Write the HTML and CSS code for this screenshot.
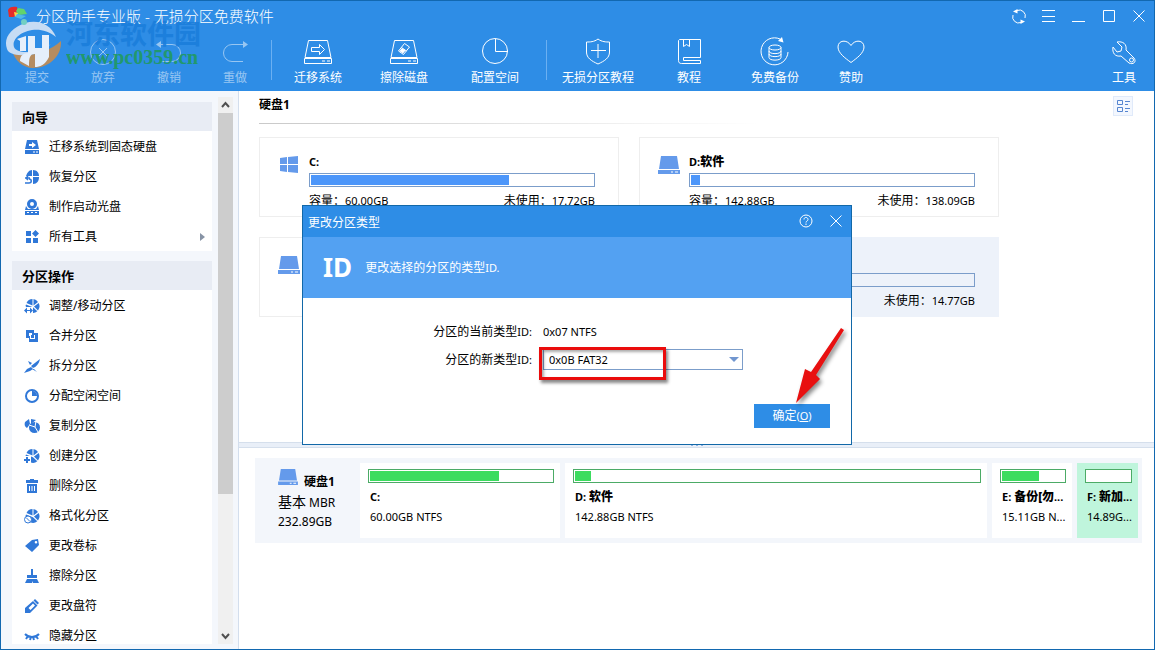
FILE: index.html
```html
<!DOCTYPE html>
<html lang="zh-CN">
<head>
<meta charset="utf-8">
<title>分区助手专业版 - 无损分区免费软件</title>
<meta name="viewport" content="width=device-width, initial-scale=1">
<link rel="stylesheet" href="styles.css">
</head>
<body>
<svg class="defs" aria-hidden="true">
  <symbol id="drive" viewBox="0 0 22 20">
    <path fill="currentColor" d="M3 1h16l2 13H1zM0 15h22v4H0z"/>
    <path fill="#fff" d="M13 16.500h2v1h-2zM17 16.500h3v1h-3z"/>
  </symbol>
  <symbol id="pie" viewBox="0 0 16 16">
    <path fill="currentColor" d="M2.500 5A6.800 6.800 0 0 1 8.500 1v6.500zM9.500 1A6.800 6.800 0 0 1 14 4l-4.500 3.500zM14.700 5a7 7 0 0 1-.7 7.500L10 8.500zM2 6.500l7 2.700 4.300 4.100a6.800 6.800 0 0 1-7 1L1.500 8z"/>
  </symbol>
</svg>
<div class="window">
  <header class="header">
    <div class="titlebar">
      <svg class="app-logo" viewBox="0 0 20 20"><path fill="#e42b2b" d="M0 4C1 1 5 0 9 1l1 5-4 5H1z"/><path fill="#f6d74b" d="m6 6 5 1-4 4z"/><path fill="#63d36d" d="m10 2 6 1 3 5-8 1-3-4z"/><path fill="#4fb9e8" d="m9 8 9 2-5 3-6-2z"/></svg>
      <h1 class="title">分区助手专业版 - 无损分区免费软件</h1>
      <div class="window-buttons">
        <button aria-label="刷新"><svg viewBox="0 0 16 16"><path d="M6 2.500A6 6 0 0 1 14 10M10 14.500A6 6 0 0 1 2 7"/><path class="solid" d="m2 3.500 4.500-2.500v4.500zM14 13.500 9.500 16v-4.500z"/></svg></button>
        <button aria-label="菜单"><svg viewBox="0 0 16 16"><path d="M1 2.500h13M1 8.500h13M1 13.500h13"/></svg></button>
        <button aria-label="最小化"><svg viewBox="0 0 16 16"><path d="M1 13.500h13"/></svg></button>
        <button aria-label="最大化"><svg viewBox="0 0 16 16"><path d="M2.500 2.500h11v11h-11z"/></svg></button>
        <button aria-label="关闭"><svg viewBox="0 0 16 16"><path d="m2.500 2.500 11 11m0-11-11 11"/></svg></button>
      </div>
    </div>
    <nav class="toolbar">
      <button class="tool tool-s" disabled><svg viewBox="0 0 30 30"></svg>提交</button>
      <button class="tool tool-s" disabled><svg viewBox="0 0 30 30"><circle cx="15" cy="15" r="12.500"/><path d="m11 11 8 8m0-8-8 8"/></svg>放弃</button>
      <button class="tool tool-s" disabled><svg viewBox="0 0 30 30"><path d="M5 7.500h13a8.500 8.500 0 0 1 0 17H7"/><path class="solid" d="M2 7.500 7 4v7z"/></svg>撤销</button>
      <button class="tool tool-s" disabled><svg viewBox="0 0 30 30"><path d="M25 7.500H12a8.500 8.500 0 0 0 0 17h11"/><path class="solid" d="m28 7.500-5-3.500v7z"/></svg>重做</button>
      <span class="divider"></span>
      <button class="tool tool-m"><svg viewBox="0 0 30 30"><path d="M5.500 3.500h19l3.500 17H2zM1.500 21.500h27v5h-27zM19 24h3m2 0h3"/><path d="M8.500 10.500h8v-3l5 5-5 5v-3h-8z"/></svg>迁移系统</button>
      <button class="tool tool-m"><svg viewBox="0 0 30 30"><path d="M5.500 3.500h19l3.500 17H2zM1.500 21.500h27v5h-27zM19 24h3m2 0h3"/><path d="m9.500 14 6-7.500 5 3.500-6 7.500zm3-3.500 5 3.500"/><path class="solid" d="m10.500 14 2.500-3 3.500 2.500-2.500 3z"/></svg>擦除磁盘</button>
      <button class="tool tool-l"><svg viewBox="0 0 30 30"><circle cx="15" cy="14" r="12.500"/><path d="M15.500 2v12.500H28"/></svg>配置空间</button>
      <span class="divider"></span>
      <button class="tool tool-l"><svg viewBox="0 0 30 30"><path d="M15 2c4 3 8 3 11.500 3v10c0 6-5 9-11.500 12C8.500 24 3.500 21 3.500 15V5C7 5 11 5 15 2zM15 7v14M8 13.500h15"/></svg>无损分区教程</button>
      <button class="tool tool-m"><svg viewBox="0 0 30 30"><path d="M5.500 2.500h21v18h-17v3h17v3h-19c-2 0-3-1-3-3v-20zM9.500 3v6.500l3-2 3 2V3"/></svg>教程</button>
      <button class="tool tool-m"><svg viewBox="0 0 30 30"><path d="M20 2A13.500 13.500 0 1 0 28 15"/><path class="solid" d="m18 4 4-4 1.500 5.500z"/><ellipse cx="15" cy="10.500" rx="6" ry="2.500"/><path d="M9 10.500v10c0 3.500 12 3.500 12 0v-10M9 14c0 3.500 12 3.500 12 0M9 17c0 3.500 12 3.500 12 0"/></svg>免费备份</button>
      <button class="tool tool-s"><svg viewBox="0 0 30 30"><path d="M15 25.500C9 21 2 16 2 10c0-7 9-8 13-1.500C19 2 28 3 28 10c0 6-7 11-13 15.500z"/></svg>赞助</button>
      <button class="tool tool-end"><svg viewBox="0 0 30 30"><path d="m8 5 5 5-1 4-4 1-4-5c-1 6 2 10 8 9l8 7c4 2 8-1 5-5l-8-8c1-6-3-9-9-8z"/><circle cx="22.500" cy="23" r="2"/></svg>工具</button>
    </nav>
    <div class="watermark">
      <svg viewBox="0 0 58 50"><path fill="#b58c60" d="M7 32c10 9 33 5 49-9 1 14-11 27-28 27C18 50 9 42 7 32z"/><path fill="#c7dcf4" d="M20 5C6 10-2 20 2 31c3 9 28 9 44-5C34 35 12 37 9 29 5 17 32 3 51 19 46 6 33 1 20 5z"/><path fill="#e5effb" d="m12 21 9-3v15h-6V23zm3 22c0-5 3-8 8-8V18h7v12h7V17h7v22c-4 8-9 10-14 10V36c-5 0-6 3-6 12z"/><circle cx="19" cy="4" r="3" fill="#72cfc3"/></svg>
      <div><p class="site-name">河东软件园</p><p class="site-url">www.pc0359.cn</p></div>
    </div>
  </header>

  <div class="body">
    <aside class="sidebar">
      <div class="panels">
        <section class="panel">
          <h2>向导</h2>
          <button><svg viewBox="0 0 16 16"><path fill="currentColor" d="M3 1h10l2 9H1zM1 11h14v4H1z"/><path fill="#fff" d="M5 5h3V3l4 3-4 3V7H5zM9 12.500h2v1H9zm3 0h2v1h-2z"/></svg>迁移系统到固态硬盘</button>
          <button><svg viewBox="0 0 16 16"><path fill="currentColor" d="M8 1v6H2c1-3 3-6 6-6zm1 0c4 0 6 3 6 6H9zm0 7h6c0 4-2 7-6 7z"/><path fill="none" stroke="currentColor" stroke-width="1.500" d="M1 9h5M2 9l2-2M2 9l2 2m-3 3h4c3 0 3-4 0-4"/></svg>恢复分区</button>
          <button><svg viewBox="0 0 16 16"><path fill="currentColor" fill-rule="evenodd" d="M8 0a5 5 0 1 1 0 10A5 5 0 0 1 8 0zm0 3a2 2 0 1 0 0 4 2 2 0 0 0 0-4zM2 7l2 3h8l2-3 1 4H1zM1 12h14v4H1z"/><path fill="#fff" d="M3 13h2v1H3zm4 0h2v1H7zm4 0h2v1h-2z"/></svg>制作启动光盘</button>
          <button class="more"><svg viewBox="0 0 16 16"><path fill="currentColor" d="M2 2h5v5H2zm0 7h5v5H2zm7 0h5v5H9zm2.500-8L15 4.500 11.500 8 8 4.500z"/></svg>所有工具</button>
        </section>
        <section class="panel">
          <h2>分区操作</h2>
          <button><svg viewBox="0 0 16 16"><use href="#pie"/><path fill="#fff" d="M0 9h9v7H0z"/><path fill="currentColor" d="m0 12.500 3-3V12h3V9.500l3 3-3 3V13H3v2.500z"/></svg>调整/移动分区</button>
          <button><svg viewBox="0 0 16 16"><path fill="currentColor" fill-rule="evenodd" d="M2 2h8v3h4v9H5v-4H2zm3 3v3h1v3h5V7H8V5z"/><path fill="currentColor" d="M7 7h3v3H7z"/></svg>合并分区</button>
          <button><svg viewBox="0 0 16 16"><path fill="currentColor" d="M16 1c-1 5-4 8-7 9L7 8zM7 9l2 2-3 2-6 2 3-4zM4 3l4 2-2 2zm6 8 3 3-5-3z"/></svg>拆分分区</button>
          <button><svg viewBox="0 0 16 16"><circle cx="8" cy="8" r="6" fill="none" stroke="currentColor" stroke-width="2"/><path fill="currentColor" d="M8 3c3 0 5 2 5 5H8z"/></svg>分配空闲空间</button>
          <button><svg viewBox="0 0 16 16"><path fill="currentColor" d="m1 4 4-3 1 5-3 4C1 9 0 7 1 4zm6-3 5 1-5 4z"/><circle cx="10.500" cy="9.500" r="5.500" fill="currentColor"/><path fill="none" stroke="#fff" d="m5 7 6 2 3 5m-3-5 1-6"/></svg>复制分区</button>
          <button><svg viewBox="0 0 16 16"><use href="#pie"/><path fill="#fff" d="M0 8h7v8H0z"/><path fill="currentColor" d="M2 9h2v2h2v2H4v2H2v-2H0v-2h2z"/></svg>创建分区</button>
          <button><svg viewBox="0 0 16 16"><path fill="currentColor" d="M6 1h4v1h4v3H2V2h4zM3 6h10v9H3z"/><path stroke="#fff" d="M5.500 8v5m2.500-5v5m2.500-5v5"/></svg>删除分区</button>
          <button><svg viewBox="0 0 16 16"><use href="#pie"/><circle cx="4" cy="11.500" r="3.500" fill="#fff" stroke="currentColor"/><path stroke="currentColor" d="m2 9.500 4 4"/></svg>格式化分区</button>
          <button><svg viewBox="0 0 16 16"><path fill="currentColor" fill-rule="evenodd" d="m8 2 6-1 1 6-7 7-7-6zm4 1a1.300 1.300 0 1 0 0 2.600A1.300 1.300 0 0 0 12 3z"/></svg>更改卷标</button>
          <button><svg viewBox="0 0 16 16"><path fill="currentColor" d="M7 1h2v6h4v3H3V7h4zM3 11h10l2 4H9v-2l-1 2H1z"/></svg>擦除分区</button>
          <button><svg viewBox="0 0 16 16"><path fill="currentColor" fill-rule="evenodd" d="m11 1 4 4-1.500 1.500-4-4zM9 3l4.500 4.500L6 15H1v-5zm0 2.500L4.500 10 6.500 12 11 7.500z"/></svg>更改盘符</button>
          <button><svg viewBox="0 0 16 16"><path fill="none" stroke="currentColor" stroke-width="2" d="M1 6c4 4 10 4 14 0M4 8l-2 3m5-2-1 3m3-3 1 3m2-4 2 3"/></svg>隐藏分区</button>
        </section>
      </div>
      <div class="scrollbar">
        <button aria-label="向上滚动"><svg viewBox="0 0 15 16"><path d="m4 10 3.500-4L11 10"/></svg></button>
        <div class="track"><div class="thumb"></div></div>
        <button aria-label="向下滚动"><svg viewBox="0 0 15 16"><path d="m4 6 3.500 4L11 6"/></svg></button>
      </div>
    </aside>

    <main class="main">
      <section class="volumes">
        <div class="volumes-head">
          <h2>硬盘1</h2>
          <button class="view" aria-label="视图"><svg viewBox="0 0 18 18"><path d="M3.500 3.500h5v4h-5zm0 7h5v4h-5zM11 4.500h5M11 7.500h3m-3 4h5m-5 3h3"/></svg></button>
        </div>
        <div class="cards">
          <article class="card">
            <svg class="card-icon win" viewBox="0 0 22 20"><path fill="currentColor" d="m2 3 7-1v7H2zm8-1 10-1v8H10zM2 10h7v7l-7-1zm8 0h10v8l-10-1z"/></svg>
            <div class="card-info"><h3>C:</h3><div class="bar"><i style="width:70.200%"></i></div><p><span><b>容量：</b>60.00GB</span><span><b>未使用：</b>17.72GB</span></p></div>
          </article>
          <article class="card">
            <svg class="card-icon" viewBox="0 0 22 20"><use href="#drive"/></svg>
            <div class="card-info"><h3>D:<b>软件</b></h3><div class="bar"><i style="width:3.200%"></i></div><p><span><b>容量：</b>142.88GB</span><span><b>未使用：</b>138.09GB</span></p></div>
          </article>
          <article class="card">
            <svg class="card-icon" viewBox="0 0 22 20"><use href="#drive"/></svg>
            <div class="card-info"><h3>E:</h3><div class="bar"><i style="width:60%"></i></div><p><span><b>容量：</b>15.11GB</span></p></div>
          </article>
          <article class="card selected">
            <svg class="card-icon" viewBox="0 0 22 20"><use href="#drive"/></svg>
            <div class="card-info"><h3>F:</h3><div class="bar"><i style="width:1%"></i></div><p><span><b>容量：</b>14.89GB</span><span><b>未使用：</b>14.77GB</span></p></div>
          </article>
        </div>
      </section>
      <div class="splitter"><i></i><i></i><i></i></div>
      <section class="map">
        <div class="strip">
          <div class="disk">
            <div class="disk-name"><svg viewBox="0 0 22 20"><use href="#drive"/></svg><h3>硬盘1</h3></div>
            <p><span>基本</span> MBR</p>
            <p>232.89GB</p>
          </div>
          <div class="parts">
            <div class="part"><div class="bar"><i style="width:71%"></i></div><h3>C:</h3><p>60.00GB NTFS</p></div>
            <div class="part"><div class="bar"><i style="width:4%"></i></div><h3>D: <b>软件</b></h3><p>142.88GB NTFS</p></div>
            <div class="part"><div class="bar"><i style="width:60%"></i></div><h3>E: <b>备份[勿</b>...</h3><p>15.11GB N...</p></div>
            <div class="part selected"><div class="bar"><i style="width:0%"></i></div><h3>F: <b>新加</b>...</h3><p>14.89G...</p></div>
          </div>
        </div>
      </section>
    </main>
  </div>
</div>

<div class="overlay">
  <form class="dialog" role="dialog" aria-labelledby="dialog-title">
    <div class="dialog-title">
      <h2 id="dialog-title">更改分区类型</h2>
      <button type="button" aria-label="帮助"><svg viewBox="0 0 16 16"><circle cx="8" cy="8" r="6"/><path d="M6 6.500c0-3 4-2.500 4 0C10 8 8 8 8 9.500m0 1v1.500"/></svg></button>
      <button type="button" aria-label="关闭"><svg viewBox="0 0 16 16"><path d="m2.500 2.500 11 11m0-11-11 11"/></svg></button>
    </div>
    <div class="banner"><strong>ID</strong><p>更改选择的分区的类型<span>ID.</span></p></div>
    <div class="fields">
      <span class="label">分区的当前类型<span>ID:</span></span>
      <output>0x07 NTFS</output>
      <label class="label" for="new-type">分区的新类型<span>ID:</span></label>
      <div class="combo"><select id="new-type"><option>0x0B FAT32</option></select></div>
    </div>
    <button class="ok" type="submit">确定<span>(<u>O</u>)</span></button>
    <div class="mark"></div>
    <svg class="arrow" viewBox="0 0 60 84"><path d="m48 4 3 2-28 45 4 4L3 79l9-34 6 3z"/></svg>
  </form>
</div>
</body>
</html>
```
FILE: styles.css
```css
* { box-sizing: border-box; }
body, h1, h2, h3, p { margin: 0; }
body {
  font: 12px/16px "Noto Sans", "Noto Sans CJK SC", sans-serif;
  color: #000;
}
button { border: 0; padding: 0; background: none; font: inherit; color: inherit; }
svg { display: block; flex: none; }
.defs { position: absolute; width: 0; height: 0; }

.window {
  display: flex;
  flex-direction: column;
  height: 100vh;
  border: 1px solid #1268b0;
  background: #fff;
}

/* Header */
.header { position: relative; background: #2e8de6; color: #fff; }
.titlebar { display: flex; align-items: center; height: 30px; padding: 0 7px; }
.app-logo { width: 20px; height: 20px; margin-right: 8px; }
.title { flex: 1; font-size: 15px; font-weight: 300; line-height: 20px; }
.window-buttons { display: flex; gap: 14px; }
.window-buttons svg { width: 16px; height: 16px; }
.header svg, .dialog-title svg { fill: none; stroke: #fff; stroke-width: 1; }
.header .app-logo, .header .watermark svg { stroke: none; }
.header .solid { fill: #fff; stroke: none; }

.toolbar { display: flex; padding: 6px 0 5px 3px; }
.tool { display: flex; flex-direction: column; align-items: center; gap: 3px; white-space: nowrap; }
.tool svg { width: 30px; height: 30px; }
.tool:disabled { color: #fff; opacity: 0.5; }
.tool-s { width: 66px; }
.tool-m { width: 86px; }
.tool-l { width: 96px; }
.tool-end { width: 60px; margin-left: auto; }
.divider { width: 1px; height: 40px; margin: 3px 3px 0; background: #6bb0f2; }

.watermark { position: absolute; left: 4px; top: 17px; display: flex; gap: 3px; pointer-events: none; }
.watermark svg { width: 58px; height: 50px; }
.site-name { font: bold 27px/30px "Noto Sans CJK SC", sans-serif; color: #1b7edb; }
.site-url { font: bold 20px/18px "Liberation Serif", serif; color: #209a60; }
.watermark div { opacity: 0.9; }

/* Sidebar */
.body { display: flex; flex: 1; min-height: 0; }
.sidebar {
  display: flex;
  flex: none;
  gap: 6px;
  width: 238px;
  padding: 6px 5px 5px 11px;
  border-right: 1px solid #d3deed;
  background: #f4f7fc;
}
.panels { display: flex; flex: 1; flex-direction: column; gap: 10px; padding-top: 5px; overflow: hidden; }
.panel { flex: none; background: #fff; }
.panel h2 { padding: 1px 10px 0; background: #e8ecf4; font-size: 13px; line-height: 28px; }
.panel button {
  display: flex;
  align-items: center;
  gap: 9px;
  width: 100%;
  height: 30px;
  padding: 1px 0 0 12px;
  text-align: left;
}
.panel svg { width: 16px; height: 16px; color: #3078d8; }
.more::after {
  content: "";
  margin: 0 7px 0 auto;
  border: 4px solid transparent;
  border-left: 5px solid #8793a5;
  border-right: 0;
}
.scrollbar { display: flex; flex-direction: column; width: 15px; background: #f0f0f0; }
.scrollbar svg { width: 15px; height: 16px; fill: none; stroke: #505050; stroke-width: 2; }
.track { flex: 1; }
.thumb { height: 74%; background: #cdcdcd; }

/* Volume cards */
.main { display: flex; flex: 1; flex-direction: column; min-width: 0; }
.volumes { height: 351px; padding: 5px 21px 0 20px; }
.volumes-head { display: flex; justify-content: space-between; height: 27px; }
.volumes-head h2 { padding-top: 1px; font-size: 12px; line-height: 16px; }
.view { width: 20px; height: 20px; border: 1px solid #e0eafa; background: #f3f7fe; }
.view svg { width: 18px; height: 18px; fill: none; stroke: #5585d0; }
.cards {
  display: grid;
  grid-template-columns: repeat(2, 360px);
  gap: 20px;
  padding-top: 14px;
  background: linear-gradient(90deg, #c9c9c9, #fff) 0 0 / 500px 1px no-repeat;
}
.card { display: flex; gap: 9px; height: 80px; padding: 16px 23px 0 18px; border: 1px solid #eee; }
.card.selected { border-color: #edf2fa; background: #edf2fa; }
.card-icon { width: 22px; height: 20px; margin-top: 1px; color: #649aeb; }
.card-info { flex: 1; font-size: 11px; }
.card-info b, .part b { font-size: 12px; }
.card-info p b { font-family: "Noto Sans CJK TC", sans-serif; font-weight: normal; line-height: 16px; }
h3 { font-size: 11px; line-height: 16px; }
.bar { height: 14px; padding: 1px; border: 1px solid #7b9dca; }
.bar i { display: block; height: 100%; background: #4c96fa; }
.card .bar { margin: 3px 0 5px; }
.card-info p { display: flex; justify-content: space-between; }

.splitter {
  display: flex;
  align-items: center;
  justify-content: center;
  gap: 3px;
  height: 6px;
  border: solid #d5dfec;
  border-width: 1px 0;
  background: #e9eff8;
}
.splitter i { width: 2px; height: 2px; background: #8db2e3; }

/* Disk map */
.map { padding: 10px 12px 0 16px; }
.strip { display: flex; padding: 5px 4px 5px 0; background: #f3f6fb; }
.disk { flex: none; width: 105px; padding: 6px 0 0 23px; font-size: 12px; }
.disk-name { display: flex; align-items: center; gap: 6px; height: 22px; }
.disk-name svg { width: 20px; height: 18px; margin-bottom: 6px; color: #649aeb; }
.disk-name h3 { padding-top: 4px; font-size: 12px; }
.disk span { font-size: 14px; }
.disk p { margin-top: 2px; line-height: 17px; }
.parts { display: grid; flex: 1; grid-template-columns: 200fr 422fr 80fr 61fr; gap: 5px; }
.part { min-width: 0; height: 75px; padding: 6px 6px 0 8px; background: #fff; font-size: 11px; white-space: nowrap; }
.part .bar { border-color: #4cab66; background: #fff; }
.part .bar i { background: #3cdc5f; }
.part h3 { margin: 6px 0 4px 2px; }
.part p { margin-left: 2px; }
.part.selected { background: #bff5dc; }

/* Dialog */
.overlay { position: fixed; inset: 0; display: grid; place-items: center; padding-right: 1px; }
.dialog {
  position: relative;
  display: flex;
  flex-direction: column;
  width: 550px;
  height: 240px;
  border: 1px solid #1268a8;
  background: #fff;
}
.dialog-title { display: flex; align-items: center; gap: 14px; height: 31px; padding: 0 7px 0 5px; background: #2e8de6; color: #fff; }
.dialog-title h2 { flex: 1; padding-top: 2px; font-size: 12px; font-weight: normal; }
.dialog-title button { padding-bottom: 2px; }
.dialog-title svg { width: 16px; height: 16px; }
.banner { display: flex; align-items: center; gap: 13px; height: 61px; padding-left: 20px; background: #53a1f2; color: #fff; }
.banner strong { padding-bottom: 1px; font-size: 26px; line-height: 32px; }
.banner span, .label span, .ok span { font-size: 11px; }
.fields {
  display: grid;
  grid-template-columns: 229px 200px;
  column-gap: 11px;
  row-gap: 9px;
  align-items: center;
  margin-top: 26px;
}
.label { text-align: right; }
.fields output { font-size: 11px; }
.combo { position: relative; }
.combo::after {
  content: "";
  position: absolute;
  right: 4px;
  top: 8px;
  border: 5px solid transparent;
  border-top-color: #7196cf;
  border-bottom: 0;
  pointer-events: none;
}
.combo select {
  display: block;
  width: 100%;
  height: 21px;
  padding: 0 5px;
  border: 1px solid #7b9dca;
  border-radius: 0;
  appearance: none;
  background: #fff;
  color: #000;
  font: 11px "Noto Sans", sans-serif;
}
.ok { align-self: flex-end; width: 76px; height: 24px; margin: auto 21px 16px 0; background: #2e8de6; color: #fff; }
.mark {
  position: absolute;
  left: 236px;
  top: 141px;
  width: 127px;
  height: 33px;
  border: 3px solid #ea0c0c;
  box-shadow: 2px 3px 3px #0007, inset 2px 2px 3px #0005;
}
.arrow { position: absolute; left: 490px; top: 118px; width: 60px; height: 84px; fill: #e81010; filter: drop-shadow(2px 3px 2px #0007); }
```
